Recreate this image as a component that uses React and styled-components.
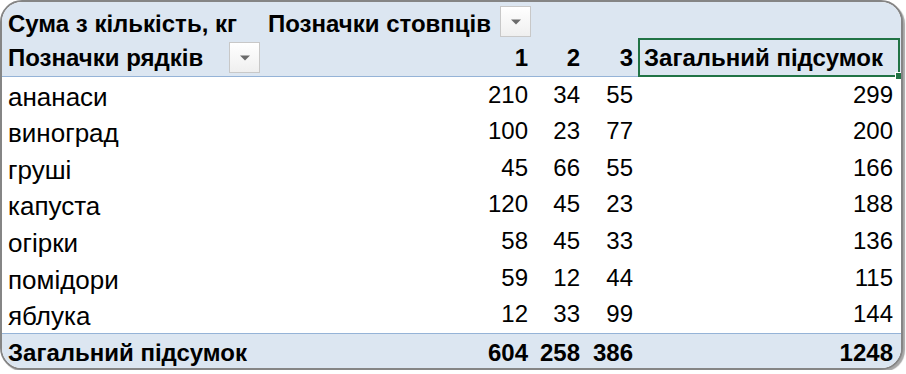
import styled, { createGlobalStyle } from 'styled-components';

const GlobalStyle = createGlobalStyle`
	html, body {
		margin: 0;
		padding: 0;
		background: #ffffff;
	}
	body {
		font-family: 'Liberation Sans', Arial, sans-serif;
		color: #000;
	}
`;

const columns = ['1', '2', '3'];

const rows = [
	{ label: 'ананаси', values: [210, 34, 55], total: 299 },
	{ label: 'виноград', values: [100, 23, 77], total: 200 },
	{ label: 'груші', values: [45, 66, 55], total: 166 },
	{ label: 'капуста', values: [120, 45, 23], total: 188 },
	{ label: 'огірки', values: [58, 45, 33], total: 136 },
	{ label: 'помідори', values: [59, 12, 44], total: 115 },
	{ label: 'яблука', values: [12, 33, 99], total: 144 },
];

const totals = { values: [604, 258, 386], total: 1248 };

const Dropdown = () => (
	<DropButton>
		<svg width='10' height='6' viewBox='0 0 10 6'>
			<path d='M0 0.5 H10 L5 5.5 Z' fill='#6b6b6b' />
		</svg>
	</DropButton>
);

const App = () => {
	return (
		<>
			<GlobalStyle />
			<Frame>
				<Grid>
					<TopCell>Сума з кількість, кг</TopCell>
					<TopCell $filter>
						<span>Позначки стовпців</span>
						<Dropdown />
					</TopCell>
					<TopCell />
					<TopCell />
					<TopCell />

					<LabelHead>
						<span>Позначки рядків</span>
						<Dropdown />
					</LabelHead>
					{columns.map((c) => (
						<ColHead key={c}>{c}</ColHead>
					))}
					<ColHead $grand>
						<Selected>
							Загальний підсумок
							<Handle />
						</Selected>
					</ColHead>

					{rows.map((r) => (
						<Row key={r.label}>
							<Label>{r.label}</Label>
							{r.values.map((v, i) => (
								<Value key={i}>{v}</Value>
							))}
							<Value $grand>{r.total}</Value>
						</Row>
					))}

					<TotalCell>Загальний підсумок</TotalCell>
					{totals.values.map((v, i) => (
						<TotalCell key={i} $num>
							{v}
						</TotalCell>
					))}
					<TotalCell $num $grand>
						{totals.total}
					</TotalCell>
				</Grid>
			</Frame>
		</>
	);
};

const Frame = styled.div`
	width: 899px;
	height: 366px;
	border: 2px solid #858585;
	border-radius: 22px;
	overflow: hidden;
	box-shadow: 2px 2px 1px rgba(0, 0, 0, 0.35);
	background: #ffffff;
`;

const Grid = styled.div`
	display: grid;
	grid-template-columns: 260px 269px 52px 53px 1fr;
	grid-template-rows: 37px 38px repeat(7, 36.6px) 1fr;
	height: 100%;
	line-height: 1;
	white-space: nowrap;
`;

const Row = styled.div`
	display: contents;
`;

const HeaderBase = styled.div`
	display: flex;
	align-items: flex-end;
	background: #dce6f1;
	font-size: 24px;
	font-weight: 700;
`;

const TopCell = styled(HeaderBase)`
	justify-content: ${(p) => (p.$filter ? 'space-between' : 'flex-start')};
	padding: 0 0 3px 6px;

	${(p) =>
		p.$filter &&
		`
		align-items: stretch;
		padding: 4px 0 0 6px;
		& > span:first-child {
			align-self: flex-end;
			padding-bottom: 3px;
		}
		& > span:last-child {
			margin-bottom: 2px;
		}
	`}
`;

const LabelHead = styled(HeaderBase)`
	justify-content: space-between;
	align-items: stretch;
	padding: 3px 2px 0 6px;
	border-bottom: 1px solid #95b3d7;

	& > span:first-child {
		align-self: flex-end;
		padding-bottom: 6px;
	}
	& > span:last-child {
		margin-bottom: 1px;
	}
`;

const ColHead = styled(HeaderBase)`
	position: relative;
	justify-content: flex-end;
	padding: 0 3px 6px 0;
	border-bottom: 1px solid #95b3d7;
`;

const Label = styled.div`
	display: flex;
	align-items: flex-end;
	font-size: 26px;
	padding: 0 0 4px 6px;
`;

const Value = styled.div`
	display: flex;
	align-items: flex-end;
	justify-content: flex-end;
	font-size: 24px;
	padding: 0 ${(p) => (p.$grand ? '8px' : '3px')} 7px 0;
`;

const TotalCell = styled.div`
	display: flex;
	align-items: flex-end;
	justify-content: ${(p) => (p.$num ? 'flex-end' : 'flex-start')};
	background: #dce6f1;
	border-top: 1px solid #95b3d7;
	font-size: 24px;
	font-weight: 700;
	padding: 0 ${(p) => (p.$grand ? '8px' : p.$num ? '3px' : '0')} 3px ${(p) => (p.$num ? '0' : '6px')};
`;

const DropButton = styled.span`
	width: 29px;
	height: 29px;
	border: 1px solid #c8c8c8;
	background: linear-gradient(#ffffff, #efefef);
	display: inline-flex;
	align-items: center;
	justify-content: center;
	box-sizing: content-box;
`;

const Selected = styled.div`
	position: absolute;
	left: 2px;
	right: 1px;
	top: -1px;
	bottom: -1px;
	border: 2px solid #217346;
	display: flex;
	align-items: flex-end;
	padding: 0 0 5px 4px;
`;

const Handle = styled.span`
	position: absolute;
	right: -5px;
	bottom: -5px;
	width: 6px;
	height: 6px;
	background: #217346;
	border: 1px solid #ffffff;
`;

export default App;
